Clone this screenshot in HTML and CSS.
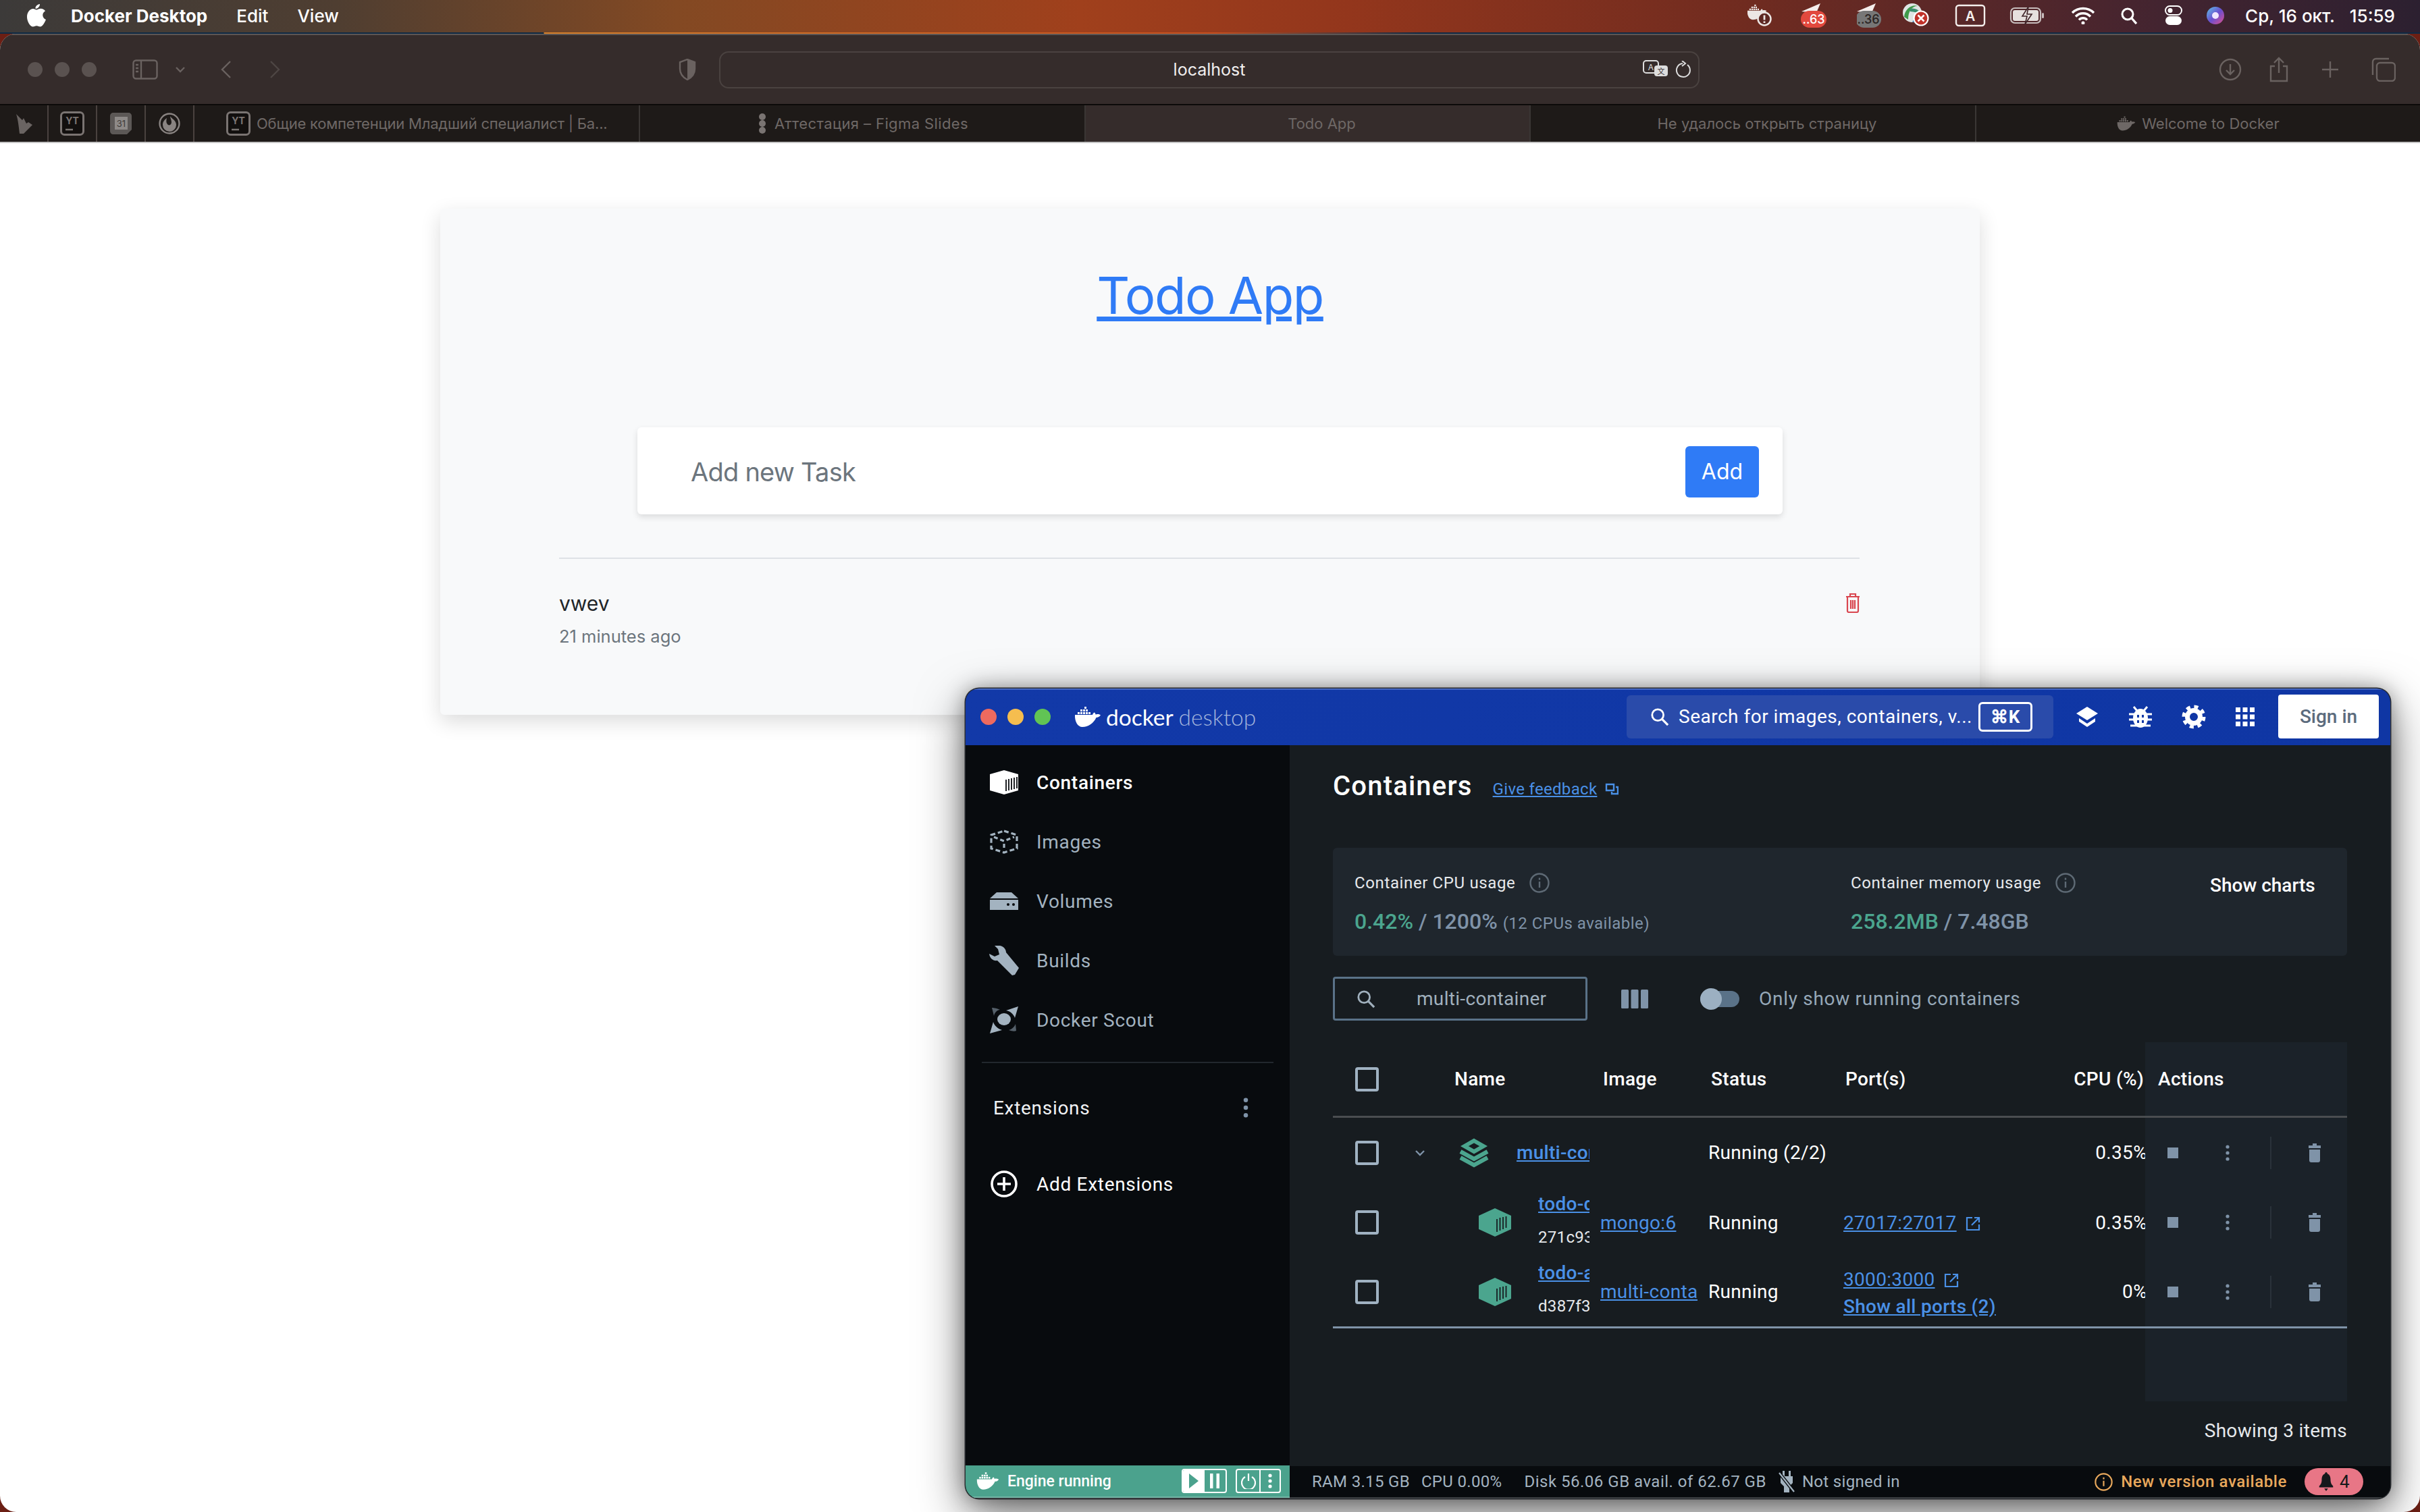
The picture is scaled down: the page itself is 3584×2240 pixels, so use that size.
FILE: index.html
```html
<!DOCTYPE html>
<html lang="en">
<head>
  <meta charset="UTF-8">
  <title>Todo App</title>
  <link rel="stylesheet" href="styles.css">
</head>
<body>
  <svg class="defs" width="0" height="0">
    <symbol id="whale" viewBox="0 0 40 30">
      <path d="M15 0h3v3h-3zM9 4h3v3H9zM13 4h3v3h-3zM17 4h3v3h-3zM5 8h3v3H5zM9 8h3v3H9zM13 8h3v3h-3zM17 8h3v3h-3zM21 8h3v3h-3z"/>
      <path d="M1 12h26c.6-2 2-3.500 3-3.500 1 1 1.500 2 1.500 3 2-.8 5-.8 7.500 .8-1.500 2.700-4 3.700-6.500 3.700C29 24 21 30 12 30 5 30 .5 22 1 12z"/>
    </symbol>
    <symbol id="box" viewBox="0 0 48 42">
      <path d="M24 0 48 11V31L24 42 0 31V11Z" fill="#4ba58e"/>
      <path d="M27 16v19M31.500 14v19M36 13v18M40.500 12v17" stroke="#171c20" stroke-width="1.800" fill="none"/>
    </symbol>
    <symbol id="trash" viewBox="0 0 20 28">
      <path d="M7 0h6v3h6v4H1V3h6zM2 9h16v16c0 2-1 3-3 3H5c-2 0-3-1-3-3z" fill="#7f93a8"/>
    </symbol>
    <symbol id="ext" viewBox="0 0 22 22">
      <path d="M10 2H2v18h18v-8M13 2h7v7M20 2 9 13" fill="none" stroke="#4a90e6" stroke-width="2.200"/>
    </symbol>
    <symbol id="dots" viewBox="0 0 8 24">
      <circle cx="4" cy="3" r="2.600" fill="#7f93a8"/><circle cx="4" cy="12" r="2.600" fill="#7f93a8"/><circle cx="4" cy="21" r="2.600" fill="#7f93a8"/>
    </symbol>
    <symbol id="info" viewBox="0 0 30 30">
      <circle cx="15" cy="15" r="13.500" fill="none" stroke="currentColor" stroke-width="2.400"/>
      <path d="M15 13v9M15 7.500v3" stroke="currentColor" stroke-width="2.400" fill="none"/>
    </symbol>
    <symbol id="loupe" viewBox="0 0 30 30">
      <circle cx="12" cy="12" r="9" fill="none" stroke="currentColor" stroke-width="3"/>
      <path d="M19 19l9 9" stroke="currentColor" stroke-width="3.400" fill="none"/>
    </symbol>
    <symbol id="yt" viewBox="0 0 36 36">
      <rect x="1.500" y="1.500" width="33" height="33" rx="5" fill="#120f0e" stroke="#7a7472" stroke-width="3"/>
      <path d="M8 27h11" stroke="#7a7472" stroke-width="2.400"/>
      <text x="18" y="19" font-size="14" font-weight="700" text-anchor="middle" fill="#7a7472" font-family="Inter">YT</text>
    </symbol>
  </svg>

  <header class="menubar">
    <div class="menu-left">
      <svg class="apple" width="28" height="34" viewBox="0 0 28 34"><path fill="#fff" d="M19 0c.3 3-2.800 7-6.500 6.800C12 3.500 15.500.3 19 0zM14 8.500c1.600 0 3.700-1.700 6.500-1.700 2.500 0 5 1.200 6.500 3.500-5.500 3.200-4.600 10.500 1 12.800-1.500 4-5 10.500-8.500 10.500-2 0-3-1.300-5.300-1.300-2.400 0-3.500 1.300-5.300 1.300C4.500 33.600 0 25.500 0 19 0 12 4.300 7 9 7c2 0 3.700 1.500 5 1.500z"/></svg>
      <b class="menu-app">Docker Desktop</b>
      <span>Edit</span>
      <span>View</span>
    </div>
    <div class="menu-right">
      <svg width="44" height="40" viewBox="6 0 44 40" fill="#ece6e4"><use href="#whale" x="5" y="3" width="30" height="24"/><circle cx="31" cy="25" r="9.500" fill="#5d2722" stroke="#ece6e4" stroke-width="2.500"/><path d="M31 19.500v7M31 28.500v2.500" stroke="#ece6e4" stroke-width="2.800"/></svg>
      <svg width="78" height="40" viewBox="-4 2 78 40"><path d="M12 16 40 4 34 18z" fill="#f4eeec"/><rect x="11" y="15" width="38" height="25" rx="12.500" fill="#e2493e"/><text x="30" y="34" font-size="18" font-weight="500" text-anchor="middle" fill="#fff" font-family="Inter">..63</text></svg>
      <svg width="36" height="40" viewBox="6 2 36 40"><path d="M6 16 34 4 28 18z" fill="#f4eeec"/><rect x="4" y="15" width="38" height="25" rx="12.500" fill="#777"/><text x="23" y="34" font-size="18" font-weight="500" text-anchor="middle" fill="#2a2423" font-family="Inter">..36</text></svg>
      <svg width="68" height="40" viewBox="-9 0 68 40"><circle cx="17" cy="16" r="14" fill="#dfe5e4"/><path d="M5 22C6 10 17 3 25 6 16 6 11 14 11 26z" fill="#3f9a4a"/><path d="M13 10c8-2 16 2 18 10-5-4-11-6-17-6z" fill="#3a8f6e"/><path d="M17 30c6 0 11-4 13-9l-9 2z" fill="#3a7fb8"/><circle cx="30" cy="24" r="10.500" fill="#c0322a" stroke="#fff" stroke-width="2.200"/><path d="M25.500 19.500l9 9M34.500 19.500l-9 9" stroke="#fff" stroke-width="2.600"/></svg>
      <svg width="58" height="34" viewBox="-1 0 58 34"><rect x="2" y="2" width="42" height="30" rx="4" fill="none" stroke="#f4eeec" stroke-width="2.400"/><text x="23" y="25" font-size="20" font-weight="600" text-anchor="middle" fill="#f4eeec" font-family="Inter">A</text></svg>
      <svg width="72" height="26" viewBox="-1 0 72 26"><rect x="5" y="2" width="44" height="22" rx="6" fill="none" stroke="#c7bdbd" stroke-width="2.200"/><rect x="8" y="5" width="38" height="16" rx="3" fill="#e6e0de"/><path d="M31 0 22 14h7l-3 12 10-15h-7z" fill="#e6e0de" stroke="#3f2428" stroke-width="1.600"/><rect x="51" y="9" width="3" height="8" rx="1.500" fill="#c7bdbd"/></svg>
      <svg width="52" height="26" viewBox="4 0 52 26"><path d="M9 9a23 23 0 0 1 32 0M14 14.500a15 15 0 0 1 22 0M19 19.500a8 8 0 0 1 12 0" fill="none" stroke="#fff" stroke-width="3.400"/><circle cx="25" cy="24" r="2.500" fill="#fff"/></svg>
      <svg width="48" height="26" viewBox="10 0 48 26"><circle cx="25" cy="11" r="8" fill="none" stroke="#fff" stroke-width="3"/><path d="M31 17l7 8" stroke="#fff" stroke-width="3.400"/></svg>
      <svg width="40" height="30" viewBox="-2 0 40 30"><rect x="1" y="1" width="24" height="13" rx="6.500" fill="none" stroke="#fff" stroke-width="2"/><circle cx="8" cy="7.500" r="3.500" fill="#fff"/><rect x="1" y="16" width="24" height="13" rx="6.500" fill="#fff"/></svg>
      <svg width="44" height="30" viewBox="4 0 44 30"><defs><linearGradient id="siri" x1="0" y1="0" x2="1" y2="1"><stop offset="0" stop-color="#5cc8e8"/><stop offset=".5" stop-color="#6a4fd0"/><stop offset="1" stop-color="#e0508a"/></linearGradient></defs><circle cx="21" cy="15" r="13" fill="url(#siri)"/><circle cx="21" cy="15" r="5" fill="#efe6ff"/></svg>
      <span class="clock">Ср, 16 окт.</span>
      <span class="clock clock-time">15:59</span>
    </div>
  </header>
  <div class="wall-strip"></div>

  <div class="browser">
    <div class="toolbar">
      <div class="lights"><i></i><i></i><i></i></div>
      <svg class="tb-sidebar" width="38" height="30" viewBox="0 0 38 30" fill="none" stroke="#6a6260" stroke-width="2.400"><rect x="1.500" y="1.500" width="35" height="27" rx="4"/><path d="M13 2v26"/><path d="M5 8h4M5 13h4M5 18h4"/></svg>
      <svg class="tb-chev" width="16" height="10" viewBox="0 0 16 10" fill="none" stroke="#6a6260" stroke-width="2.400"><path d="M2 2l6 6 6-6"/></svg>
      <svg class="tb-back" width="16" height="28" viewBox="0 0 16 28" fill="none" stroke="#6a6260" stroke-width="2.400"><path d="M14 2 2 14l12 12"/></svg>
      <svg class="tb-forward" width="16" height="28" viewBox="0 0 16 28" fill="none" stroke="#4e4644" stroke-width="2.400"><path d="M2 2l12 12L2 26"/></svg>
      <svg class="tb-shield" width="26" height="32" viewBox="0 0 26 32"><path d="M13 1l11 4v10c0 8-5 13-11 16C7 28 2 23 2 15V5z" fill="none" stroke="#6a6260" stroke-width="2.400"/><path d="M13 1l11 4v10c0 8-5 13-11 16z" fill="#6a6260"/></svg>
      <div class="urlbar">
        <span class="url">localhost</span>
        <svg class="url-tr" width="38" height="28" viewBox="0 0 38 28"><rect x="1" y="1" width="22" height="18" rx="4" fill="none" stroke="#ddd" stroke-width="2"/><text x="12" y="15" font-size="12" text-anchor="middle" fill="#ddd" font-family="Inter">A</text><rect x="17" y="8" width="20" height="16" rx="4" fill="#ddd"/><text x="27" y="21" font-size="11" text-anchor="middle" fill="#352c2b" font-family="Noto Sans CJK SC">文</text></svg>
        <svg class="url-re" width="24" height="26" viewBox="0 0 24 26" fill="none" stroke="#ddd" stroke-width="2"><path d="M18 6a10 10 0 1 1-7-2"/><path d="M10 0l5 4-5 4"/></svg>
      </div>
      <div class="tb-right">
        <svg width="34" height="34" viewBox="0 0 34 34" fill="none" stroke="#6a6260" stroke-width="2.400"><circle cx="17" cy="17" r="15"/><path d="M17 9v15M11 18l6 6 6-6"/></svg>
        <svg width="30" height="38" viewBox="0 0 30 38" fill="none" stroke="#6a6260" stroke-width="2.400"><path d="M9 14H3v22h24V14h-6M15 24V2M8 9l7-7 7 7"/></svg>
        <svg width="42" height="26" viewBox="-8 0 42 26" fill="none" stroke="#6a6260" stroke-width="2.400"><path d="M13 1v24M1 13h24"/></svg>
        <svg width="36" height="36" viewBox="0 0 36 36" fill="none" stroke="#6a6260" stroke-width="2.400"><rect x="8" y="8" width="27" height="27" rx="5"/><path d="M2 26V7c0-3 2-5 5-5h19"/></svg>
      </div>
    </div>
    <div class="tabs">
      <div class="tab pin"><svg width="28" height="34" viewBox="0 0 28 34" fill="#6a6462"><path d="M3 3l9 9 2-3 4 8 3-2 6 4-13 13H8C7 24 6 12 3 3z"/></svg></div>
      <div class="tab pin"><svg width="36" height="36"><use href="#yt"/></svg></div>
      <div class="tab pin"><svg width="32" height="32" viewBox="0 0 32 32"><path d="M5 0h22c3 0 5 2 5 5v20l-7 7H5c-3 0-5-2-5-5V5c0-3 2-5 5-5z" fill="#5c5856"/><rect x="7" y="6" width="19" height="19" fill="#8e8a88"/><text x="16.500" y="21" font-size="13" text-anchor="middle" fill="#3e3a38" font-family="Inter">31</text></svg></div>
      <div class="tab pin"><svg width="32" height="32" viewBox="0 0 32 32" fill="#8a8482"><circle cx="16" cy="16" r="14.500" fill="none" stroke="#8a8482" stroke-width="2.400"/><path d="M17 5c1 3 9 6 9 13a10 10 0 0 1-20 0c0-5 3-8 6-10-1 4-1 7 1 9 2 3 6 1 6-3 0-3-2-6-2-9z"/></svg></div>
      <div class="tab tab-first"><svg width="36" height="36"><use href="#yt"/></svg><span>Общие компетенции Младший специалист | Ба...</span></div>
      <div class="tab tab-figma"><svg width="18" height="30" viewBox="0 0 18 30" fill="#7a7472"><circle cx="9" cy="5" r="5"/><circle cx="9" cy="15" r="5"/><circle cx="9" cy="25" r="5"/></svg><span>Аттестация – Figma Slides</span></div>
      <div class="tab active no-icon"><span>Todo App</span></div>
      <div class="tab no-icon"><span>Не удалось открыть страницу</span></div>
      <div class="tab"><svg width="28" height="22" fill="#6e6866"><use href="#whale"/></svg><span>Welcome to Docker</span></div>
    </div>

    <main class="page">
      <section class="todo-card">
        <h1 class="todo-title"><a href="#">Todo App</a></h1>
        <div class="todo-form">
          <span class="todo-placeholder">Add new Task</span>
          <button class="todo-add">Add</button>
        </div>
        <div class="todo-item">
          <div>
            <div class="todo-name">vwev</div>
            <div class="todo-time">21 minutes ago</div>
          </div>
          <svg class="todo-trash" width="24" height="30" viewBox="0 0 24 30" fill="none" stroke="#d9464f" stroke-width="2.200"><path d="M2 6h20M8 6V2h8v4M4 6v21c0 1.500 .8 2 2 2h12c1.200 0 2-.5 2-2V6M9 11v13M12 11v13M15 11v13"/></svg>
        </div>
      </section>
    </main>
  </div>

  <div class="dd">
    <div class="dd-title">
      <div class="dd-lights"><i class="red"></i><i class="yel"></i><i class="grn"></i></div>
      <svg class="dd-whale" width="40" height="30" fill="#fff"><use href="#whale"/></svg>
      <div class="dd-logo"><b>docker</b> <span>desktop</span></div>
      <div class="dd-search">
        <svg class="dd-loupe" width="28" height="28"><use href="#loupe"/></svg>
        <span class="dd-search-text">Search for images, containers, v...</span>
        <kbd>⌘K</kbd>
      </div>
      <div class="dd-icons">
        <svg width="36" height="36" viewBox="0 0 36 36" fill="#fff"><path d="M18 3 34 13 18 23 2 13z"/><path d="M6 20v5l12 8 12-8v-5l-12 8z"/></svg>
        <svg width="36" height="36" viewBox="0 0 36 36" fill="#fff"><path d="M8 3l5 6M28 3l-5 6" stroke="#fff" stroke-width="3"/><ellipse cx="18" cy="20" rx="11" ry="14"/><path d="M1 14h34M1 22h34M3 31h30" stroke="#fff" stroke-width="3"/><path d="M13 15h3v4h-3zM20 15h3v4h-3zM13 23h3v4h-3zM20 23h3v4h-3z" fill="#0f38a5"/></svg>
        <svg width="36" height="36" viewBox="0 0 36 36" fill="none" stroke="#fff"><circle cx="18" cy="18" r="9.500" stroke-width="7"/><circle cx="18" cy="18" r="15" stroke-width="5" stroke-dasharray="6 5.780"/></svg>
        <svg width="30" height="30" viewBox="0 0 30 30" fill="#fff"><path d="M1 1h7v7H1zM11.500 1h7v7h-7zM22 1h7v7h-7zM1 11.500h7v7H1zM11.500 11.500h7v7h-7zM22 11.500h7v7h-7zM1 22h7v7H1zM11.500 22h7v7h-7zM22 22h7v7h-7z"/></svg>
      </div>
      <button class="dd-signin">Sign in</button>
    </div>

    <div class="dd-body">
      <nav class="side">
        <a class="side-item on">
          <svg width="42" height="36" viewBox="0 0 42 36"><path d="M21 0 42 6V30L21 36 0 30V6Z" fill="#fff"/><path d="M24 14v17M28 13v17M32 12v17M36 11v17M40 10v17" stroke="#080b0e" stroke-width="1.800"/></svg>
          <span>Containers</span>
        </a>
        <a class="side-item">
          <svg width="42" height="36" viewBox="0 0 42 36" fill="none" stroke="#a3b3c0" stroke-width="3.200"><path d="M21 2 40 8V28L21 34 2 28V8Z" stroke-dasharray="7 4"/><path d="M6 11l15 6 15-6M21 21v8" stroke-dasharray="6 4"/></svg>
          <span>Images</span>
        </a>
        <a class="side-item">
          <svg width="42" height="26" viewBox="0 0 42 26" fill="#a3b3c0"><path d="M10 0h22l10 9H0z"/><path d="M0 11h42v15H0z"/><circle cx="27" cy="18" r="2" fill="#080b0e"/><circle cx="35" cy="18" r="2" fill="#080b0e"/></svg>
          <span>Volumes</span>
        </a>
        <a class="side-item">
          <svg width="44" height="44" viewBox="0 0 44 44" fill="#a3b3c0"><path d="M8 0h8c5 1 9 5 9 10l19 23-6 10-4 1-22-22C6 23 1 19 0 12l8 4 7-3-2-8z"/></svg>
          <span>Builds</span>
        </a>
        <a class="side-item">
          <svg width="42" height="40" viewBox="0 0 42 40"><ellipse cx="21" cy="19" rx="10" ry="9" fill="#a3b3c0"/><path d="M42 0 24 6c6 1 11 5 13 11z" fill="#a3b3c0"/><path d="M0 40l18-5C12 33 7 29 5 23z" fill="#a3b3c0"/><path d="M6 14c1-5 5-9 9-9C9 2 4 2 3 2z" fill="#55606a"/><path d="M38 26c-2 5-6 8-10 9 5 2 9 2 11 1z" fill="#55606a"/></svg>
          <span>Docker Scout</span>
        </a>
        <div class="side-rule"></div>
        <div class="side-ext"><span>Extensions</span><svg width="10" height="32" viewBox="0 0 8 24"><use href="#dots"/></svg></div>
        <a class="side-item on side-add">
          <svg width="42" height="42" viewBox="0 0 42 42" fill="none" stroke="#fff" stroke-width="3.600"><circle cx="21" cy="21" r="18"/><path d="M21 11v20M11 21h20"/></svg>
          <span>Add Extensions</span>
        </a>
      </nav>

      <div class="main">
        <div class="main-head">
          <h2>Containers</h2>
          <a class="feedback">Give feedback</a>
          <svg class="feedback-ic" width="20" height="18" viewBox="0 0 20 18" fill="none" stroke="#4a90e6" stroke-width="2.400"><path d="M2 2h11v9H2zM16 6h3v10h-9v-3"/></svg>
        </div>

        <div class="stats">
          <div class="stat stat-cpu">
            <div class="stat-label">Container CPU usage <svg width="30" height="30" class="stat-i"><use href="#info"/></svg></div>
            <div class="stat-val"><em>0.42%</em> / 1200% <small>(12 CPUs available)</small></div>
          </div>
          <div class="stat stat-mem">
            <div class="stat-label">Container memory usage <svg width="30" height="30" class="stat-i"><use href="#info"/></svg></div>
            <div class="stat-val"><em>258.2MB</em> / 7.48GB</div>
          </div>
          <div class="show-charts">Show charts</div>
        </div>

        <div class="filters">
          <div class="filter-box">
            <svg width="28" height="28"><use href="#loupe"/></svg>
            <span>multi-container</span>
          </div>
          <svg class="cols" width="40" height="28" viewBox="0 0 40 28" fill="#7f93a8"><rect width="11" height="28" rx="1.500"/><rect x="14.500" width="11" height="28" rx="1.500"/><rect x="29" width="11" height="28" rx="1.500"/></svg>
          <div class="toggle"><i></i></div>
          <span class="toggle-label">Only show running containers</span>
        </div>

        <div class="table">
          <div class="actions-bg"></div>
          <div class="row head">
            <div class="c-check"><i class="check"></i></div>
            <div class="c-name">Name</div>
            <div class="c-image">Image</div>
            <div class="c-status">Status</div>
            <div class="c-ports">Port(s)</div>
            <div class="c-cpu">CPU (%)</div>
            <div class="c-actions">Actions</div>
          </div>

          <div class="row">
            <div class="c-check"><i class="check"></i></div>
            <div class="c-name group">
              <svg class="chev" width="16" height="10" viewBox="0 0 16 10" fill="none" stroke="#7f93a8" stroke-width="2.400"><path d="M2 2l6 6 6-6"/></svg>
              <svg width="48" height="44" viewBox="0 0 48 44" fill="none" stroke="#4ba58e" stroke-width="6"><path d="M24 4 38 12 24 20 10 12z"/><path d="M4 20l20 11 20-11"/><path d="M4 29l20 11 20-11"/></svg>
              <div class="name-clip"><a class="strong">multi-container</a></div>
            </div>
            <div class="c-image"></div>
            <div class="c-status">Running (2/2)</div>
            <div class="c-ports"></div>
            <div class="c-cpu"><span class="cpu-val">0.35%</span></div>
            <div class="c-actions acts">
              <i class="stop"></i>
              <svg class="more" width="8" height="24"><use href="#dots"/></svg>
              <i class="act-rule"></i>
              <svg width="20" height="28"><use href="#trash"/></svg>
            </div>
          </div>

          <div class="row">
            <div class="c-check"><i class="check"></i></div>
            <div class="c-name child">
              <svg width="48" height="42"><use href="#box"/></svg>
              <div class="name-clip">
                <a class="strong">todo-database</a>
                <div class="short-id">271c93a0bc12</div>
              </div>
            </div>
            <div class="c-image"><a>mongo:6</a></div>
            <div class="c-status">Running</div>
            <div class="c-ports"><a>27017:27017</a> <svg class="ext" width="22" height="22"><use href="#ext"/></svg></div>
            <div class="c-cpu"><span class="cpu-val">0.35%</span></div>
            <div class="c-actions acts">
              <i class="stop"></i>
              <svg class="more" width="8" height="24"><use href="#dots"/></svg>
              <i class="act-rule"></i>
              <svg width="20" height="28"><use href="#trash"/></svg>
            </div>
          </div>

          <div class="row last">
            <div class="c-check"><i class="check"></i></div>
            <div class="c-name child">
              <svg width="48" height="42"><use href="#box"/></svg>
              <div class="name-clip">
                <a class="strong">todo-app</a>
                <div class="short-id">d387f3e17c40</div>
              </div>
            </div>
            <div class="c-image"><a>multi-container-app</a></div>
            <div class="c-status">Running</div>
            <div class="c-ports ports-two">
              <div><a>3000:3000</a> <svg class="ext" width="22" height="22"><use href="#ext"/></svg></div>
              <div><a class="strong">Show all ports (2)</a></div>
            </div>
            <div class="c-cpu"><span class="cpu-val">0%</span></div>
            <div class="c-actions acts">
              <i class="stop"></i>
              <svg class="more" width="8" height="24"><use href="#dots"/></svg>
              <i class="act-rule"></i>
              <svg width="20" height="28"><use href="#trash"/></svg>
            </div>
          </div>
        </div>

        <div class="showing">Showing 3 items</div>
      </div>
    </div>

    <footer class="status">
      <div class="engine">
        <svg width="34" height="26" fill="#fff"><use href="#whale"/></svg>
        <span>Engine running</span>
        <div class="eng-btns">
          <div class="eng-group">
            <div class="eng-play"><svg width="14" height="22" viewBox="0 0 14 22" fill="#4ba28d"><path d="M0 0l14 11L0 22z"/></svg></div>
            <div class="eng-cell"><svg width="14" height="22" viewBox="0 0 14 22" fill="#fff"><path d="M0 0h4.500v22H0zM9.500 0H14v22H9.500z"/></svg></div>
          </div>
          <div class="eng-group">
            <div class="eng-cell"><svg width="22" height="24" viewBox="0 0 22 24" fill="none" stroke="#fff" stroke-width="2.200"><path d="M6 6a10 10 0 1 0 10 0M11 1v11"/></svg></div>
            <div class="eng-cell cell-rule"><svg width="6" height="22" viewBox="0 0 6 22" fill="#fff"><circle cx="3" cy="3" r="2.600"/><circle cx="3" cy="11" r="2.600"/><circle cx="3" cy="19" r="2.600"/></svg></div>
          </div>
        </div>
      </div>
      <div class="status-info">
        <span class="si-ram">RAM 3.15 GB</span>
        <span class="si-cpu">CPU 0.00%</span>
        <span class="si-disk">Disk 56.06 GB avail. of 62.67 GB</span>
        <svg class="si-plug" width="26" height="34" viewBox="0 0 26 34" fill="#a3b3c0"><path d="M7 1h3v8H7zM16 1h3v8h-3zM4 9h18v10l-5 5v9H9v-9l-5-5z"/><path d="M2 4l22 28" stroke="#080b0e" stroke-width="5"/><path d="M2 4l22 28" stroke="#a3b3c0" stroke-width="2.200"/></svg>
        <span>Not signed in</span>
      </div>
      <div class="status-right">
        <svg class="new-i" width="27" height="27" viewBox="0 0 30 30"><use href="#info"/></svg>
        <span class="new-ver">New version available</span>
        <div class="bell">
          <svg width="24" height="30" viewBox="0 0 24 30" fill="#15181b"><path d="M12 0c1 0 2 1 2 2.500C18 4 19 8 19 13c0 4 2 7 4 9v2H1v-2c2-2 4-5 4-9 0-5 1-9 5-10.500C10 1 11 0 12 0zM9 26h6l-3 4z"/></svg>
          <span>4</span>
        </div>
      </div>
    </footer>
  </div>
</body>
</html>
```

FILE: styles.css
```css
* {
  box-sizing: border-box;
}
html, body {
  margin: 0;
  height: 2240px;
  overflow: hidden;
}
body {
  position: relative;
  background: #6b1f14;
  font-family: Roboto, "Noto Sans", sans-serif;
}
.defs {
  position: absolute;
}
a {
  color: inherit;
}

/* mac menu bar */
.menubar {
  height: 48px;
  display: flex;
  justify-content: space-between;
  align-items: center;
  padding: 0 37px 2px 40px;
  color: #fff;
  font: 500 26px Inter, sans-serif;
  background: linear-gradient(90deg, #3c3a39 0, #4f3e31 500px, #834923 1000px, #a0401c 1600px, #93361c 2000px, #6f2b20 2600px, #432430 3200px, #2c2030 3584px);
}
.menu-left {
  display: flex;
  align-items: center;
}
.menu-left .apple {
  margin-right: 37px;
}
.menu-left span {
  margin-left: 43px;
}
.menu-app {
  font-weight: 700;
}
.menu-right {
  display: flex;
  align-items: center;
  gap: 20px;
}
.clock {
  font-size: 26px;
  margin-left: -3px;
  white-space: nowrap;
}
.clock-time {
  margin-left: 2px;
}
.wall-strip {
  height: 2px;
  background: linear-gradient(90deg, #0e2a45 0, #0e2a45 805px, #d8822c 806px, #c8501f 1800px, #0e2a45 2100px);
}

/* safari */
.browser {
  height: 2190px;
  background: #fff;
  border-radius: 24px;
  overflow: hidden;
}
.toolbar {
  position: relative;
  height: 104px;
  display: flex;
  align-items: center;
  background: #352c2b;
  border-top: 2px solid #5d5654;
  padding-left: 41px;
}
.lights {
  display: flex;
  gap: 18px;
}
.lights i {
  width: 22px;
  height: 22px;
  border-radius: 50%;
  background: #5a5250;
}
.tb-sidebar {
  margin-left: 53px;
}
.tb-chev {
  margin-left: 25px;
}
.tb-back {
  margin-left: 52px;
}
.tb-forward {
  margin-left: 56px;
}
.tb-shield {
  margin-left: 590px;
}
.urlbar {
  width: 1452px;
  height: 55px;
  margin-left: 34px;
  display: flex;
  align-items: center;
  justify-content: flex-end;
  gap: 10px;
  padding-right: 10px;
  border: 2px solid #4a4240;
  border-radius: 14px;
  position: relative;
}
.url {
  position: absolute;
  left: 0;
  right: 0;
  text-align: center;
  font: 400 25px Inter, sans-serif;
  color: #f0eeee;
}
.tb-right {
  margin-left: auto;
  padding-right: 36px;
  display: flex;
  align-items: center;
  gap: 40px;
}
.tabs {
  height: 58px;
  display: flex;
  background: #1e1a18;
  border-top: 2px solid #0c0a09;
  border-bottom: 2px solid #c4c4c4;
  color: #6e6866;
  font: 400 22px Inter, sans-serif;
}
.tab {
  width: 660px;
  display: flex;
  align-items: center;
  justify-content: center;
  gap: 9px;
  border-right: 2px solid #3a3634;
  white-space: nowrap;
}
.tab.pin {
  width: 72px;
  border-right-color: #4a423f;
}
.tab.no-icon {
  padding-left: 42px;
}
.tab-first {
  justify-content: flex-start;
  padding-left: 47px;
  letter-spacing: -.2px;
}
.tab-figma {
  letter-spacing: .4px;
}
.tab.active {
  background: #352c2b;
  width: 659px;
}
.tab:last-child {
  border-right: 0;
  flex: 1;
}

/* todo page */
.page {
  padding-top: 97px;
}
.todo-card {
  width: 2280px;
  height: 750px;
  margin: 0 auto;
  padding-top: 80px;
  background: #f8f9fa;
  border-radius: 6px;
  box-shadow: 0 10px 30px rgba(0, 0, 0, .14);
  font-family: Inter, sans-serif;
}
.todo-title {
  margin: 0;
  text-align: center;
  font-size: 76px;
  font-weight: 400;
  line-height: 96px;
  letter-spacing: -.02em;
  color: #2f7bf6;
}
.todo-form {
  width: 1696px;
  height: 129px;
  margin: 148px auto 0;
  padding: 2px 35px 0 79px;
  display: flex;
  justify-content: space-between;
  align-items: center;
  background: #fff;
  border-radius: 6px;
  box-shadow: 0 4px 10px rgba(0, 0, 0, .12);
}
.todo-placeholder {
  font-size: 38px;
  letter-spacing: -.02em;
  color: #6c757d;
}
.todo-add {
  width: 109px;
  height: 76px;
  border: 0;
  border-radius: 6px;
  background: #2f7bf6;
  color: #fff;
  font: 400 32px Inter, sans-serif;
}
.todo-item {
  margin: 64px 178px 0 176px;
  padding-top: 46px;
  display: flex;
  justify-content: space-between;
  border-top: 2px solid #dee2e6;
}
.todo-name {
  font-size: 30px;
  line-height: 40px;
  color: #212529;
}
.todo-time {
  margin-top: 13px;
  font-size: 25.5px;
  line-height: 32px;
  color: #6c757d;
}
.todo-trash {
  margin: 4px -2px 0 0;
}

/* docker desktop window */
.dd {
  position: absolute;
  left: 1430px;
  top: 1020px;
  width: 2110px;
  height: 1200px;
  display: flex;
  flex-direction: column;
  border-radius: 20px;
  overflow: hidden;
  background: #080b0e;
  letter-spacing: .02em;
  box-shadow: 0 0 0 1.500px #2c2f33, 0 24px 70px rgba(0, 0, 0, .55), 0 0 30px rgba(0, 0, 0, .35);
}
.dd-title {
  height: 84px;
  flex: none;
  display: flex;
  align-items: center;
  padding: 0 17px 3px 22px;
  background: linear-gradient(90deg, #1239a8, #0f36a4);
  border-top: 2px solid #4467c4;
  color: #fff;
}
.dd-lights {
  display: flex;
  gap: 16px;
}
.dd-lights i {
  width: 24px;
  height: 24px;
  border-radius: 50%;
}
.dd-lights .red { background: #ee6a5f; }
.dd-lights .yel { background: #f5bd4f; }
.dd-lights .grn { background: #61c454; }
.dd-whale {
  margin-left: 35px;
}
.dd-logo {
  margin-left: 7px;
  font: 400 33.5px Lato, sans-serif;
  letter-spacing: 0;
  white-space: nowrap;
}
.dd-logo b {
  font-weight: 400;
}
.dd-logo span {
  color: #a3b5dc;
  font-weight: 300;
}
.dd-search {
  width: 632px;
  height: 64px;
  margin-left: auto;
  display: flex;
  align-items: center;
  padding-left: 35px;
  background: #2a4baa;
  border-radius: 6px;
}
.dd-search-text {
  margin-left: 14px;
  font-size: 28px;
  letter-spacing: .5px;
  white-space: nowrap;
}
.dd-search kbd {
  width: 80px;
  height: 44px;
  margin-left: auto;
  margin-right: 31px;
  border: 3px solid #fff;
  border-radius: 6px;
  font: 700 26px Roboto, sans-serif;
  text-align: center;
  line-height: 38px;
}
.dd-icons {
  display: flex;
  align-items: center;
  gap: 43px;
  margin-left: 32px;
}
.dd-signin {
  width: 149px;
  height: 65px;
  margin-left: 34px;
  border: 0;
  border-radius: 4px;
  background: #fff;
  color: #5b6b7d;
  font: 500 28px Roboto, sans-serif;
}
.dd-body {
  flex: 1;
  display: flex;
  min-height: 0;
}

/* sidebar */
.side {
  width: 480px;
  flex: none;
  padding-top: 11px;
  background: #080b0e;
}
.side-item {
  height: 88px;
  display: flex;
  align-items: center;
  padding-left: 35px;
  color: #a3b3c0;
  font-size: 28px;
  letter-spacing: .7px;
}
.side-item svg {
  flex: none;
  width: 44px;
  margin-right: 27px;
}
.side-item span {
  margin-left: -1px;
}
.side-item.on {
  color: #fff;
  font-weight: 500;
}
.side-item:nth-child(n+8) {
  font-weight: 400;
}
.side-rule {
  height: 2px;
  margin: 18px 24px 0;
  background: #22282d;
}
.side-ext {
  height: 56px;
  margin-top: 38px;
  padding: 0 60px 0 41px;
  display: flex;
  justify-content: space-between;
  align-items: center;
  color: #f0f2f4;
  font-size: 28px;
  letter-spacing: .7px;
}
.side-add {
  margin-top: 41px;
}

/* main panel */
.main {
  flex: 1;
  min-width: 0;
  display: flex;
  flex-direction: column;
  padding: 36px 64px 34px 64px;
  background: #171c20;
  color: #fff;
}
.main-head {
  display: flex;
  align-items: center;
  height: 48px;
}
.main-head h2 {
  margin: 0;
  font-size: 40px;
  font-weight: 500;
  letter-spacing: .03em;
}
.feedback {
  margin: 10px 0 0 30px;
  color: #4a90e6;
  font-size: 24px;
  text-decoration: underline;
}
.feedback-ic {
  margin: 10px 0 0 12px;
}
.stats {
  height: 160px;
  margin-top: 68px;
  padding: 36px 0 0 32px;
  display: flex;
  background: #1f262d;
  border-radius: 6px;
}
.stat-cpu {
  width: 735px;
}
.stat-mem {
  width: 532px;
}
.stat-label {
  display: flex;
  align-items: center;
  height: 32px;
  color: #e6e9ec;
  font-size: 24px;
  letter-spacing: .026em;
}
.stat-i {
  margin-left: 21px;
  color: #5e6a75;
}
.stat-val {
  margin-top: 21px;
  line-height: 40px;
  font-size: 32px;
  font-weight: 500;
  color: #7f93a8;
  letter-spacing: 0;
}
.stat-val em {
  font-style: normal;
  color: #4ba58e;
}
.stat-val small {
  font-size: 24px;
  font-weight: 400;
  letter-spacing: .02em;
}
.show-charts {
  padding-top: 4px;
  font-size: 28px;
  font-weight: 500;
  line-height: 32px;
  letter-spacing: 0;
  white-space: nowrap;
}
.filters {
  height: 65px;
  margin-top: 31px;
  display: flex;
  align-items: center;
}
.filter-box {
  width: 377px;
  height: 65px;
  display: flex;
  align-items: center;
  padding-left: 32px;
  border: 3px solid #5a7288;
  border-radius: 4px;
  color: #a0b0bd;
  font-size: 28px;
}
.filter-box span {
  margin-left: 61px;
  white-space: nowrap;
}
.cols {
  margin-left: 50px;
}
.toggle {
  position: relative;
  width: 58px;
  height: 24px;
  margin-left: 77px;
  background: #5a7288;
  border-radius: 12px;
}
.toggle i {
  position: absolute;
  left: 0;
  top: -4px;
  width: 32px;
  height: 32px;
  border-radius: 50%;
  background: #9cb0c2;
}
.toggle-label {
  margin-left: 29px;
  color: #96a8b8;
  font-size: 28px;
  letter-spacing: .025em;
}

/* containers table */
.table {
  position: relative;
  margin-top: 32px;
}
.actions-bg {
  position: absolute;
  right: 0;
  top: 0;
  width: 299px;
  height: 532px;
  background: #1b2229;
}
.row {
  position: relative;
  height: 103.5px;
  display: grid;
  grid-template-columns: 120px 260px 160px 216px 310px 137px 299px;
  align-items: center;
  font-size: 28px;
}
.row.head {
  height: 112px;
  border-bottom: 3px solid #4a4d50;
  font-weight: 500;
}
.row.last {
  height: 104.5px;
  border-bottom: 3px solid #7f93a8;
}
.row a {
  color: #4a90e6;
  text-decoration: underline;
}
.row a.strong {
  font-weight: 500;
  letter-spacing: .01em;
}
.c-check {
  padding-left: 33px;
}
.check {
  display: block;
  width: 35px;
  height: 36px;
  border: 4px solid #a0b2c2;
  border-radius: 4px;
}
.c-name {
  min-width: 0;
}
.head .c-name {
  padding-left: 60px;
}
.c-name.group {
  display: flex;
  align-items: center;
}
.group .chev {
  flex: none;
  margin-right: 48px;
  margin-left: 1px;
}
.group .name-clip {
  margin-left: 39px;
}
.c-name.child {
  display: flex;
  align-items: center;
  padding-left: 96px;
}
.child .name-clip {
  margin-left: 40px;
}
.name-clip {
  flex: 1;
  min-width: 0;
  overflow: hidden;
  white-space: nowrap;
}
.short-id {
  margin: 18px 0 8px;
  font-size: 24px;
  line-height: 30px;
  color: #e6e9ec;
}
.child .name-clip a {
  display: inline-block;
  line-height: 30px;
}
.c-image {
  padding-left: 16px;
  overflow: hidden;
  white-space: nowrap;
}
.head .c-image {
  padding-left: 20px;
}
.c-status {
  padding-left: 16px;
  white-space: nowrap;
}
.head .c-status {
  padding-left: 20px;
}
.c-ports {
  white-space: nowrap;
}
.head .c-ports {
  padding-left: 3px;
}
.ext {
  margin-left: 6px;
  vertical-align: -3px;
}
.ports-two {
  padding-top: 3px;
}
.ports-two div + div {
  margin-top: 7px;
}
.c-cpu {
  text-align: right;
  overflow: hidden;
  white-space: nowrap;
}
.head .c-cpu {
  padding-right: 2px;
}
.cpu-val {
  display: inline-block;
  margin-right: -3px;
}
.c-actions {
  padding-left: 19px;
  position: relative;
}
.acts {
  display: flex;
  align-items: center;
  padding-left: 33px;
}
.stop {
  width: 16px;
  height: 16px;
  background: #7f93a8;
}
.more {
  margin-left: 69px;
}
.act-rule {
  width: 2px;
  height: 48px;
  margin: 0 54px 0 59px;
  background: #2a323a;
}
.showing {
  margin-top: auto;
  text-align: right;
  position: relative;
  line-height: 36px;
  font-size: 28px;
  color: #e6e9ec;
}

/* status bar */
.status {
  height: 48px;
  flex: none;
  display: flex;
  align-items: center;
  background: #080b0e;
  border-bottom: 2px solid #3a3d40;
  font-size: 24px;
}
.engine {
  width: 480px;
  height: 48px;
  flex: none;
  display: flex;
  align-items: center;
  padding-left: 16px;
  background: #4ba28d;
  border-bottom: 2px solid #72b5a5;
  color: #fff;
  font-size: 23px;
  font-weight: 500;
  letter-spacing: 0;
}
.engine span {
  margin-left: 12px;
}
.eng-btns {
  margin-left: auto;
  margin-right: 13px;
  display: flex;
  gap: 13px;
}
.eng-group {
  display: flex;
  width: 67px;
  height: 36px;
  border: 2px solid #fff;
  border-radius: 4px;
  overflow: hidden;
}
.eng-play,
.eng-cell {
  flex: 1;
  display: flex;
  align-items: center;
  justify-content: center;
}
.eng-play {
  background: #fff;
}
.eng-cell.cell-rule {
  flex: none;
  width: 30px;
  border-left: 2px solid #fff;
}
.status-info {
  display: flex;
  align-items: center;
  margin-left: 33px;
  color: #a3b3c0;
  white-space: nowrap;
}
.si-cpu {
  margin-left: 17px;
}
.si-disk {
  margin-left: 33px;
  letter-spacing: .5px;
}
.si-plug {
  margin: 0 10px 0 17px;
}
.status-right {
  margin-left: auto;
  padding-right: 40px;
  display: flex;
  align-items: center;
  color: #e8a85c;
}
.new-i {
  color: #e8a85c;
}
.new-ver {
  margin-left: 12px;
  font-weight: 500;
  letter-spacing: .025em;
  white-space: nowrap;
}
.bell {
  width: 87px;
  height: 40px;
  margin-left: 26px;
  display: flex;
  align-items: center;
  justify-content: center;
  gap: 8px;
  background: #e87686;
  border-radius: 20px;
  color: #15181b;
  font-size: 26px;
}
.bell svg {
  height: 28px;
}
```
